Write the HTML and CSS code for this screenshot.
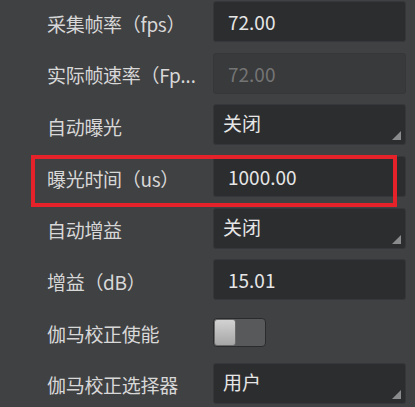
FILE: index.html
```html
<!DOCTYPE html>
<html lang="zh-CN">
<head>
<meta charset="utf-8">
<link rel="stylesheet" href="styles.css">
</head>
<body>
<div class="panel">
  <div class="row">
    <div class="label">采集帧率（fps）</div>
    <div class="field num">72.00</div>
  </div>
  <div class="row">
    <div class="label">实际帧速率（Fp<span class="dots">...</span></div>
    <div class="field num disabled">72.00</div>
  </div>
  <div class="row">
    <div class="label">自动曝光</div>
    <div class="field select">关闭<svg class="corner" width="9" height="9" viewBox="0 0 9 9"><polygon points="9,0 9,9 0,9"/></svg></div>
  </div>
  <div class="row highlight">
    <div class="label">曝光时间（us）</div>
    <div class="field num">1000.00</div>
    <div class="redbox"></div>
  </div>
  <div class="row">
    <div class="label">自动增益</div>
    <div class="field select">关闭<svg class="corner" width="9" height="9" viewBox="0 0 9 9"><polygon points="9,0 9,9 0,9"/></svg></div>
  </div>
  <div class="row">
    <div class="label">增益（dB）</div>
    <div class="field num">15.01</div>
  </div>
  <div class="row">
    <div class="label">伽马校正使能</div>
    <div class="toggle"><div class="knob"></div></div>
  </div>
  <div class="row">
    <div class="label">伽马校正选择器</div>
    <div class="field select">用户<svg class="corner" width="9" height="9" viewBox="0 0 9 9"><polygon points="9,0 9,9 0,9"/></svg></div>
  </div>
</div>
</body>
</html>
```

FILE: styles.css
```css
html, body {
  margin: 0;
  padding: 0;
  background: #404143;
}
body {
  width: 415px;
  height: 407px;
  overflow: hidden;
  font-family: "Noto Sans CJK SC", "Noto Sans", sans-serif;
}
.panel {
  display: flex;
  flex-direction: column;
  gap: 10.7px;
  padding-top: 1px;
}
.row {
  position: relative;
  display: flex;
  align-items: center;
  height: 41px;
  padding: 0 9px 0 47px;
}
.label {
  width: 153px;
  margin-right: 13px;
  flex: none;
  color: #d8d8d8;
  font-size: 19px;
  white-space: nowrap;
  padding-top: 3px;
  box-sizing: border-box;
  letter-spacing: -0.3px;
}
.dots {
  font-family: "Noto Sans", sans-serif;
  letter-spacing: 0;
}
.field {
  position: relative;
  flex: 1;
  height: 41px;
  box-sizing: border-box;
  background: #2c2d2f;
  border: 1px solid #36373a;
  border-radius: 3px;
  color: #e6e6e6;
  font-size: 19px;
  display: flex;
  align-items: center;
}
.num {
  padding-left: 14px;
}
.select {
  padding-left: 9px;
  align-items: flex-start;
  padding-top: 4px;
}
.disabled {
  background: #393a3c;
  color: #747474;
}
.corner {
  position: absolute;
  right: 4px;
  bottom: 4px;
  fill: #8a8b8d;
}
.redbox {
  position: absolute;
  left: 31px;
  top: -1px;
  width: 366px;
  height: 52px;
  box-sizing: border-box;
  border: 4px solid #e5222a;
  pointer-events: none;
}
.toggle {
  width: 53px;
  height: 29px;
  box-sizing: border-box;
  background: #58595b;
  border: 1px solid #2a2b2d;
  border-radius: 4px;
  display: flex;
  margin-top: 1px;
}
.knob {
  width: 22px;
  height: 27px;
  box-sizing: border-box;
  background: linear-gradient(#d2d2d2, #a6a6a6);
  border: 1px solid #6a6a6a;
  border-radius: 3px;
}
```
